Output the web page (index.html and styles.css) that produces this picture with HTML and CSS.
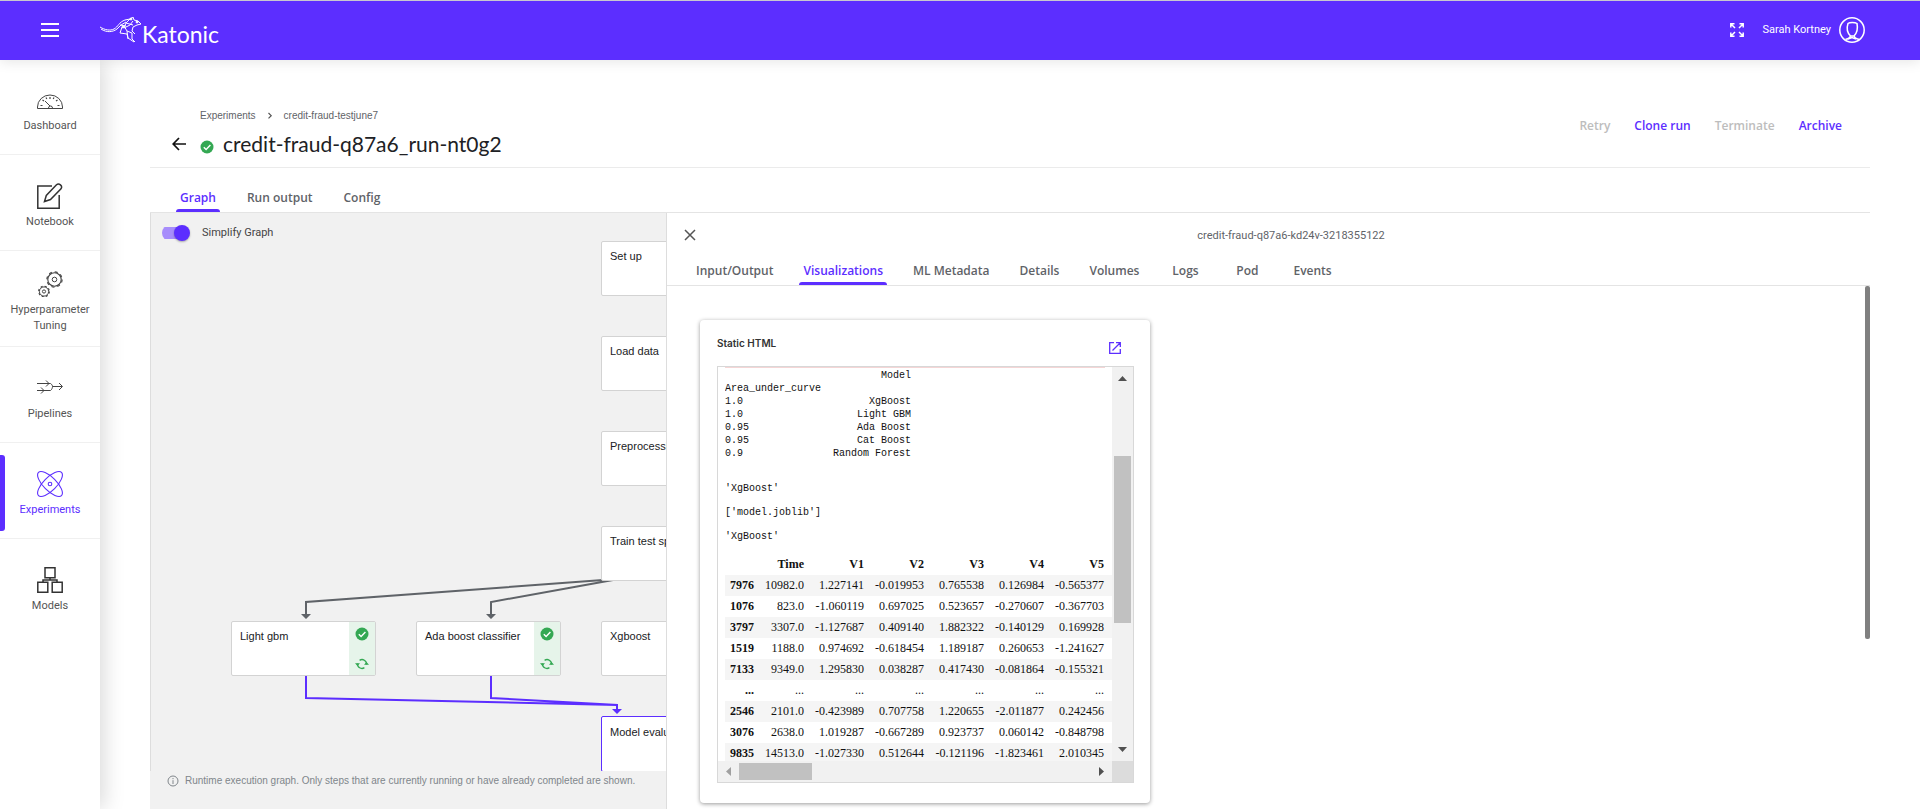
FILE: index.html
```html
<!DOCTYPE html>
<html lang="en">
<head>
<meta charset="utf-8">
<title>Katonic - credit-fraud-q87a6_run-nt0g2</title>
<link rel="stylesheet" href="styles.css">
</head>
<body>
<svg class="defs" aria-hidden="true">
  <symbol id="check" viewBox="0 0 14 14"><circle cx="7" cy="7" r="6.5" fill="#34a853"/><path d="M3.8 7.2l2.3 2.3 4.3-4.4" fill="none" stroke="#fff" stroke-width="1.4"/></symbol>
  <symbol id="cached" viewBox="0 0 14 14"><path d="M11.5 7.5A4.500 4.500 0 0 0 4.600 3.300M2.500 6.500A4.500 4.500 0 0 0 9.400 10.700" fill="none" stroke="#34a853" stroke-width="1.4"/><path d="M9 7.800h5L11.500 5zM0 6.200h5L2.500 9z" fill="#34a853"/></symbol>
</svg>
<header class="topbar">
  <button class="icon-btn menu" aria-label="Menu"><svg width="18" height="14" viewBox="0 0 18 14"><path d="M0 1h18M0 7h18M0 13h18" stroke="#fff" stroke-width="2"/></svg></button>
  <a class="brand" href="#">
    <svg width="42" height="26" viewBox="0 0 42 26" fill="none" stroke="#fff" stroke-width="1" stroke-linejoin="round"><path d="M0 10c5 3 10 4 14 2s5-7 11-9l5-1 3-2 1 3 4 1 3 3-4 1-4 2-1 4 3 3M1 12c6 4 12 3 16 0l4-4 5-3M22 10l-2 6 7 1 1 4 6 4M24 9l3 5 5 2v6l3 3M30 2l-4 4-2 5 6-3 3-4M26 6l7 2M20 8l6 1M27 14l1 8"/><circle cx="31" cy="2" r="1" fill="#fff"/><circle cx="23" cy="10" r="1" fill="#fff"/><circle cx="37" cy="5" r="1" fill="#fff"/></svg>
    <span class="brand-name">Katonic</span>
  </a>
  <button class="icon-btn expand" aria-label="Full screen"><svg width="14" height="14" viewBox="0 0 14 14" fill="none" stroke="#fff" stroke-width="1.500"><path d="M.8 4.500V.8h3.700M1 1l4 4M9.500.8h3.700v3.700M13 1L9 5M.8 9.500v3.700h3.700M1 13l4-4M9.500 13.200h3.700V9.500M13 13L9 9"/></svg></button>
  <button class="user"><span>Sarah Kortney</span><svg width="26" height="26" viewBox="0 0 26 26" fill="none" stroke="#fff" stroke-width="1.500"><circle cx="13" cy="13" r="12.200"/><path d="M9 6.500c1.500-1.500 7-1.500 9 0 1 5-.5 10-3 12.500h-3.500C8.500 16 7.500 11 9 6.500zM11.500 18.500c0 2.500-2 3-5 4M15 18.500c0 2.500 2 3 5 4M9 22l4-1.500 4 1.500"/></svg></button>
</header>
<div class="shell">
  <nav class="sidebar">
    <a href="#" class="nav-item"><svg width="26" height="26" viewBox="0 0 26 26" fill="none" stroke="#444" stroke-width="1"><path d="M.5 21.500V20a12.500 12 0 0 1 25 0v1.500zM13 19l-5-5M11.500 21a2 2 0 0 1 4 0"/><path d="M3.500 18.500h2M20.500 18.500h2M5.500 13l1.500 1M13 10v2M20.500 13L19 14M9 10.500l.8 1.500M17 10.500l-.8 1.500" stroke-width="1.200"/></svg><span>Dashboard</span></a>
    <a href="#" class="nav-item"><svg width="26" height="26" viewBox="0 0 26 26" fill="none" stroke="#333" stroke-width="1.500"><path d="M15 3H.8v22.200H22.200V12"/><path d="M7.500 18.500l1.800-6L19.500 1.800c2.500-2.200 6.500 1 4.500 4L13.500 16.500z"/></svg><span>Notebook</span></a>
    <a href="#" class="nav-item"><svg width="26" height="26" viewBox="0 0 26 26" fill="none" stroke="#444"><circle cx="17.500" cy="8.500" r="2.300"/><circle cx="7" cy="20.500" r="1.600"/><circle cx="17.500" cy="8.500" r="6.700" stroke-width="1.100"/><circle cx="17.500" cy="8.500" r="7.600" stroke-width="1.200" stroke-dasharray="3 2.970"/><circle cx="7" cy="20.500" r="4.600" stroke-width="1"/><circle cx="7" cy="20.500" r="5.300" stroke-width="1.200" stroke-dasharray="2.080 2.080"/></svg><span>Hyperparameter Tuning</span></a>
    <a href="#" class="nav-item"><svg width="26" height="26" viewBox="0 0 26 26" fill="none" stroke="#444"><path d="M0 8.500h13.500c1.500 1 2 2 2 3s-.5 3-2 4H0M15.500 11.500H25M9 5.500l3 3-3 3M4 12.500l3 3-3 3M22 8l3.500 3.500L22 15"/></svg><span>Pipelines</span></a>
    <a href="#" class="nav-item active"><svg width="26" height="26" viewBox="0 0 26 26" fill="none" stroke="#5c2eff" stroke-width="1.100"><ellipse cx="13" cy="13" rx="16.300" ry="6.500" transform="rotate(45 13 13)"/><ellipse cx="13" cy="13" rx="16.300" ry="6.500" transform="rotate(-45 13 13)"/><circle cx="13" cy="13" r="1.800"/></svg><span>Experiments</span></a>
    <a href="#" class="nav-item"><svg width="26" height="26" viewBox="0 0 26 26" fill="none" stroke="#333" stroke-width="1.500"><path d="M8 .8h10v10H8zM.8 15.200h10v10h-10zM15.200 15.200h10v10h-10zM13 10.800V13M6 15v-2h14v2"/></svg><span>Models</span></a>
  </nav>
  <main class="main">
    <div class="page-head">
      <div>
        <nav class="crumbs" aria-label="Breadcrumb"><a href="#">Experiments</a><svg width="6" height="8" viewBox="0 0 6 8"><path d="M1.500 1l2.700 2.700-2.700 2.700" fill="none" stroke="#555" stroke-width="1.200"/></svg><a href="#">credit-fraud-testjune7</a></nav>
        <div class="title-row">
          <button class="icon-btn" aria-label="Back"><svg width="14" height="14" viewBox="0 0 14 14" fill="none" stroke="#111" stroke-width="1.700"><path d="M14 7H1.500M7 1L1.200 7 7 13"/></svg></button>
          <svg class="title-status" width="14" height="14"><use href="#check"/></svg>
          <h1>credit-fraud-q87a6_run-nt0g2</h1>
        </div>
      </div>
      <div class="actions"><button disabled>Retry</button><button>Clone run</button><button disabled>Terminate</button><button>Archive</button></div>
    </div>
    <div class="tabs run-tabs"><button class="on">Graph</button><button>Run output</button><button>Config</button></div>
    <div class="work">
      <section class="graph">
        <div class="canvas">
          <svg class="edges" width="517" height="558" viewBox="0 0 517 558" fill="none" stroke-width="2">
            <path d="M452 367L155 389v14M462 367L340 389v14" stroke="#5f6368"/>
            <path d="M150 401h10l-5 5zM335 401h10l-5 5z" fill="#5f6368"/>
            <path d="M155 463v22l311 7M340 463v22l126 7v6" stroke="#5c2eff"/>
            <path d="M461 496h10l-5 5z" fill="#5c2eff"/>
          </svg>
          <div class="node setup">Set up</div>
          <div class="node load">Load data</div>
          <div class="node prep">Preprocessing</div>
          <div class="node train">Train test split</div>
          <div class="node gbm">Light gbm<span class="state"><svg width="14" height="14"><use href="#check"/></svg><svg width="14" height="14"><use href="#cached"/></svg></span></div>
          <div class="node ada">Ada boost classifier<span class="state"><svg width="14" height="14"><use href="#check"/></svg><svg width="14" height="14"><use href="#cached"/></svg></span></div>
          <div class="node xgb">Xgboost</div>
          <div class="node eval">Model evaluation</div>
          <label class="toggle"><input type="checkbox" role="switch" checked>Simplify Graph</label>
        </div>
        <p class="note"><svg width="12" height="12" viewBox="0 0 12 12" fill="none" stroke="#80868b"><circle cx="6" cy="6" r="5"/><path d="M6 5.200V9M6 3v1.200"/></svg>Runtime execution graph. Only steps that are currently running or have already completed are shown.</p>
      </section>
      <section class="panel">
        <div class="panel-head"><button class="icon-btn" aria-label="Close"><svg width="12" height="12" viewBox="0 0 12 12"><path d="M1 1l10 10M11 1L1 11" stroke="#555" stroke-width="1.500"/></svg></button><span>credit-fraud-q87a6-kd24v-3218355122</span></div>
        <div class="tabs panel-tabs"><button>Input/Output</button><button class="on">Visualizations</button><button>ML Metadata</button><button>Details</button><button>Volumes</button><button>Logs</button><button>Pod</button><button>Events</button></div>
        <div class="panel-body">
          <article class="card">
            <div class="card-head"><h2>Static HTML</h2><button class="icon-btn" aria-label="Open in new window"><svg width="12" height="12" viewBox="0 0 12 12" fill="none" stroke="#5c2eff" stroke-width="1.300"><path d="M5 .7H.7v10.600h10.600V7M7 .7h4.300V5M11 1L3.500 8.500"/></svg></button></div>
            <div class="frame">
              <div class="frame-view">
<pre class="out scores">                          Model
Area_under_curve
1.0                     XgBoost
1.0                   Light GBM
0.95                  Ada Boost
0.95                  Cat Boost
0.9               Random Forest</pre>
                <pre class="out">'XgBoost'</pre>
                <pre class="out">['model.joblib']</pre>
                <pre class="out">'XgBoost'</pre>
                <table class="data">
                  <colgroup><col class="c-id"><col class="c-time"><col><col><col><col><col></colgroup>
                  <thead><tr><th></th><th>Time</th><th>V1</th><th>V2</th><th>V3</th><th>V4</th><th>V5</th></tr></thead>
                  <tbody>
                    <tr><th>7976</th><td>10982.0</td><td>1.227141</td><td>-0.019953</td><td>0.765538</td><td>0.126984</td><td>-0.565377</td></tr>
                    <tr><th>1076</th><td>823.0</td><td>-1.060119</td><td>0.697025</td><td>0.523657</td><td>-0.270607</td><td>-0.367703</td></tr>
                    <tr><th>3797</th><td>3307.0</td><td>-1.127687</td><td>0.409140</td><td>1.882322</td><td>-0.140129</td><td>0.169928</td></tr>
                    <tr><th>1519</th><td>1188.0</td><td>0.974692</td><td>-0.618454</td><td>1.189187</td><td>0.260653</td><td>-1.241627</td></tr>
                    <tr><th>7133</th><td>9349.0</td><td>1.295830</td><td>0.038287</td><td>0.417430</td><td>-0.081864</td><td>-0.155321</td></tr>
                    <tr><th>...</th><td>...</td><td>...</td><td>...</td><td>...</td><td>...</td><td>...</td></tr>
                    <tr><th>2546</th><td>2101.0</td><td>-0.423989</td><td>0.707758</td><td>1.220655</td><td>-2.011877</td><td>0.242456</td></tr>
                    <tr><th>3076</th><td>2638.0</td><td>1.019287</td><td>-0.667289</td><td>0.923737</td><td>0.060142</td><td>-0.848798</td></tr>
                    <tr><th>9835</th><td>14513.0</td><td>-1.027330</td><td>0.512644</td><td>-0.121196</td><td>-1.823461</td><td>2.010345</td></tr>
                  </tbody>
                </table>
              </div>
              <div class="vbar"><svg width="9" height="5" viewBox="0 0 9 5"><path d="M0 5L4.500 0 9 5z" fill="#505050"/></svg><i class="v-thumb"></i><svg width="9" height="5" viewBox="0 0 9 5"><path d="M0 0l4.500 5L9 0z" fill="#505050"/></svg></div>
              <div class="hbar"><svg width="5" height="9" viewBox="0 0 5 9"><path d="M5 0L0 4.500 5 9z" fill="#a0a0a0"/></svg><i class="h-thumb"></i><svg width="5" height="9" viewBox="0 0 5 9"><path d="M0 0l5 4.500L0 9z" fill="#505050"/></svg></div>
              <div class="corner"></div>
            </div>
          </article>
          <i class="panel-thumb"></i>
        </div>
      </section>
    </div>
  </main>
</div>
</body>
</html>
```
FILE: styles.css
```css
* { box-sizing: border-box; }
body { margin: 0; height: 100vh; display: flex; flex-direction: column; overflow: hidden; background: #fff; color: #202124; font-family: Roboto, Lato, sans-serif; font-size: 11px; }
button { font: inherit; color: inherit; background: none; border: 0; padding: 0; cursor: pointer; }
a { color: inherit; text-decoration: none; }
svg { display: block; flex: none; }
.defs { position: absolute; width: 0; height: 0; }

.topbar { display: flex; align-items: center; flex: none; height: 60px; padding: 0 55px 2px 41px; border-top: 1px solid #c8c8d0; background: #5c2eff; color: #fff; box-shadow: 0 2px 12px rgba(0, 0, 0, .1); z-index: 1; }
.brand { display: flex; align-items: flex-end; margin-left: 41px; }
.brand-name { font-family: Lato, sans-serif; font-size: 23px; line-height: 24px; height: 21px; }
.expand { margin-left: auto; }
.user { display: flex; align-items: center; gap: 8px; margin-left: 19px; }

.shell { display: flex; flex: 1; min-height: 0; }
.sidebar { flex: none; width: 100px; background: #fff; box-shadow: 4px 0 20px rgba(0, 0, 0, .15); }
.nav-item { position: relative; display: flex; flex-direction: column; align-items: center; justify-content: center; gap: 5px; min-height: 96px; padding: 7px 8px 0; border-bottom: 1px solid #f0f0f0; color: #555; line-height: 16px; text-align: center; }
.nav-item:first-child { min-height: 95px; }
.nav-item:last-child { border-bottom: 0; }
.nav-item.active { color: #5c2eff; }
.nav-item.active::before { content: ""; position: absolute; left: 0; top: 12px; bottom: 7px; width: 5px; border-radius: 0 3px 3px 0; background: #5c2eff; }

.main { display: flex; flex-direction: column; flex: 1; min-width: 0; padding: 0 50px; }
.page-head { display: flex; justify-content: space-between; flex: none; height: 108px; border-bottom: 1px solid #ebebeb; }
.crumbs { display: flex; align-items: center; gap: 11px; padding: 48px 0 0 50px; font: 10px/16px "Liberation Sans", Arial, sans-serif; color: #5f6368; }
.title-row { display: flex; align-items: center; height: 28px; margin-top: 6px; padding-left: 22px; }
.title-status { margin: 6px 9px 0 14px; }
h1 { margin: 0; font-family: Lato, sans-serif; font-size: 21px; font-weight: 400; line-height: 28px; }
.actions { display: flex; gap: 24px; padding: 56px 28px 0 0; align-items: flex-start; font-family: "Open Sans", sans-serif; font-size: 12px; font-weight: 600; line-height: 20px; color: #5c2eff; }
.actions button:disabled { color: #bdbdbd; }

.tabs { display: flex; flex: none; border-bottom: 1px solid #e4e4e4; color: #5f6368; font-family: "Open Sans", sans-serif; font-size: 12px; font-weight: 600; }
.tabs button { position: relative; min-width: 32px; line-height: 16px; white-space: nowrap; }
.tabs .on { color: #5c2eff; }
.tabs .on::after { content: ""; position: absolute; left: -4px; right: -4px; bottom: 0; height: 3px; border-radius: 3px 3px 0 0; background: #5c2eff; }
.run-tabs { height: 45px; gap: 31px; padding-left: 30px; }
.run-tabs button { padding-top: 16px; }

.work { display: flex; flex: 1; min-height: 0; }
.graph { display: flex; flex-direction: column; flex: 0 0 30%; background: #f1f1f1; }
.canvas { position: relative; flex: 1; overflow: hidden; border-left: 1px solid #ddd; }
.toggle { position: absolute; left: 11px; top: 10px; display: flex; align-items: center; gap: 12px; line-height: 20px; color: #444; }
.toggle input { appearance: none; position: relative; width: 28px; height: 16px; margin: 0; background: linear-gradient(#a78dfb, #a78dfb) 0 2px / 24px 12px no-repeat; border-radius: 8px; }
.toggle input::after { content: ""; position: absolute; right: 0; top: 0; width: 16px; height: 16px; border-radius: 50%; background: #5c2eff; box-shadow: 0 1px 2px rgba(0, 0, 0, .3); }
.edges { position: absolute; left: 0; top: 0; }
.node { position: absolute; width: 145px; height: 55px; padding: 6px 8px; border: 1px solid #d3d3d3; border-radius: 2px; background: #fff; font: 11px/16px "Liberation Sans", Arial, sans-serif; white-space: nowrap; }
.setup { left: 450px; top: 28px; }
.load { left: 450px; top: 123px; }
.prep { left: 450px; top: 218px; }
.train { left: 450px; top: 313px; }
.gbm { left: 80px; top: 408px; }
.ada { left: 265px; top: 408px; }
.xgb { left: 450px; top: 408px; }
.eval { left: 450px; top: 503px; height: 56px; padding-top: 7px; border-color: #5c2eff; }
.state { position: absolute; top: 0; right: 0; bottom: 0; width: 26px; display: flex; flex-direction: column; align-items: center; justify-content: space-between; padding: 5px 0 4px; background: #e6f4ea; }
.note { display: flex; gap: 6px; flex: none; height: 38px; margin: 0; padding: 4px 0 0 17px; font: 10px/12px "Liberation Sans", Arial, sans-serif; color: #80868b; white-space: nowrap; }

.panel { display: flex; flex-direction: column; flex: 1; min-width: 0; border-left: 1px solid #ddd; background: #fff; }
.panel-head { display: flex; align-items: center; flex: none; height: 44px; padding-left: 17px; color: #5f6368; }
.panel-head span { flex: 1; padding-left: 16px; text-align: center; }
.panel-tabs { height: 29px; gap: 30px; padding-left: 29px; }
.panel-body { display: flex; align-items: flex-start; justify-content: space-between; flex: 1; min-height: 0; }
.panel-thumb { width: 5px; height: 353px; border-radius: 2px; background: #808080; }
.card { width: 450px; margin: 34px 0 0 33px; padding: 0 16px 20px 17px; border-radius: 4px; background: #fff; box-shadow: 0 1px 4px rgba(0, 0, 0, .4); }
.card-head { display: flex; justify-content: space-between; height: 46px; padding: 15px 13px 0 0; align-items: flex-start; }
.card-head .icon-btn { margin-top: 7px; }
h2 { margin: 0; font-family: Inter, sans-serif; font-size: 10px; font-weight: 600; line-height: 16px; color: #333; }
.frame { display: grid; grid-template: 394px 21px / 1fr 21px; border: 1px solid #d8d8d8; }
.frame-view { overflow: hidden; margin-left: 7px; }
.out { margin: 0 0 11px; font: 10px/13px "Liberation Mono", monospace; color: #111; }
.out.scores { margin-right: 7px; margin-bottom: 22px; padding-top: 1px; border-top: 1px solid #f5d5d5; }
.data { width: 387px; margin-top: 10px; border-collapse: collapse; table-layout: fixed; font: 12px/21px "Liberation Serif", "Times New Roman", serif; color: #111; }
.data th, .data td { padding: 0; text-align: right; padding-right: 8px; }
.data .c-id { width: 37px; }
.data .c-time { width: 50px; }
.data tbody tr:nth-child(odd) { background: #f5f5f5; }
.vbar { display: flex; flex-direction: column; align-items: center; justify-content: space-between; padding: 9px 0; background: #f1f1f1; }
.v-thumb { width: 17px; height: 167px; margin-bottom: 50px; background: #c1c1c1; }
.hbar { display: flex; align-items: center; padding: 0 8px; background: #f1f1f1; }
.h-thumb { width: 73px; height: 17px; margin: 0 auto 0 8px; background: #c1c1c1; }
.corner { background: #dcdcdc; }
```
